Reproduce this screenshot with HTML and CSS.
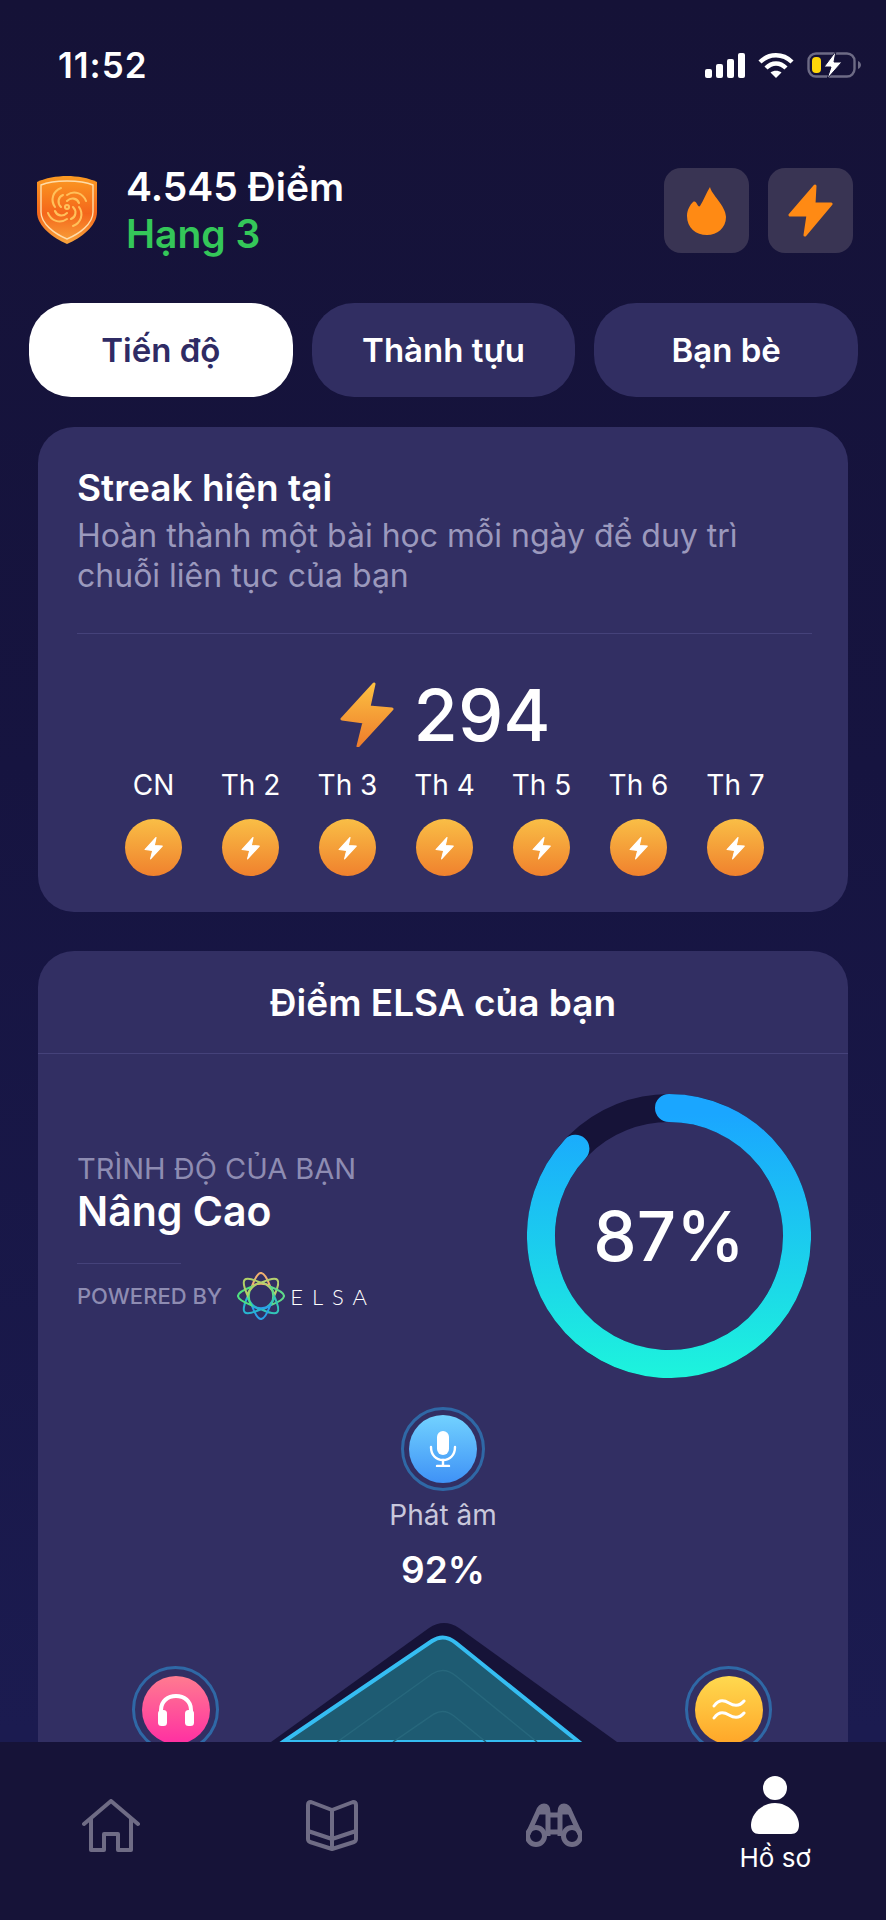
FILE: index.html
```html
<!DOCTYPE html>
<html lang="vi">
<head>
    <meta charset="UTF-8">
    <meta name="viewport" content="width=device-width, initial-scale=1.0">
    <title>Hồ sơ</title>
    <link rel="stylesheet" href="styles.css">
</head>
<body>

    <svg class="defs" width="0" height="0">
        <defs>
            <symbol id="bolt" viewBox="0 0 55 65">
                <path d="M35 2 L3 37 L25 40 L19 64 L53 27 L30 25 Z" stroke-width="3" stroke-linejoin="round"/>
            </symbol>
            <symbol id="petal" viewBox="-24 -24 48 48" overflow="visible">
                <path d="M-9 -10 C-6 -18 -3 -23 0 -23 C3 -23 6 -18 9 -10 C4 -13 -4 -13 -9 -10 Z"/>
            </symbol>
            <g id="swirl-arm">
                <path d="M30 25 C34 21 40 22 42 27"/>
                <path d="M30 19 C37 14 46 17 49 25"/>
            </g>
            <linearGradient id="boltGrad" x1="0" y1="0" x2="0" y2="1">
                <stop offset="0" stop-color="#fcc041"/>
                <stop offset="1" stop-color="#ee7d2c"/>
            </linearGradient>
            <linearGradient id="ringGrad" gradientUnits="userSpaceOnUse" x1="0" y1="20" x2="0" y2="284">
                <stop offset="0" stop-color="#1aa6ff"/>
                <stop offset="1" stop-color="#1df4dc"/>
            </linearGradient>
            <linearGradient id="shieldGrad" x1="0" y1="0" x2="0" y2="1">
                <stop offset="0" stop-color="#fb9a22"/>
                <stop offset="0.55" stop-color="#f4661b"/>
                <stop offset="1" stop-color="#f8a53c"/>
            </linearGradient>
        </defs>
    </svg>

    <!-- Status bar -->
    <div class="status-bar">
        <span class="clock">11:52</span>
        <div class="status-icons">
            <svg width="40" height="25" viewBox="0 0 40 25" fill="#fff">
                <rect x="0" y="16" width="7" height="9" rx="2"/>
                <rect x="11" y="11" width="7" height="14" rx="2"/>
                <rect x="22" y="6" width="7" height="19" rx="2"/>
                <rect x="33" y="0" width="7" height="25" rx="2"/>
            </svg>
            <svg width="36" height="25" viewBox="0 0 36 25" fill="none" stroke="#fff" stroke-width="4.4">
                <path d="M2 9 C11 0 25 0 34 9"/>
                <path d="M8 15 C14 9 22 9 28 15"/>
                <path d="M18 25 L12.5 19.5 C15.5 17 20.5 17 23.5 19.5 Z" fill="#fff" stroke="none"/>
            </svg>
            <svg width="56" height="30" viewBox="0 0 56 30">
                <rect x="1.5" y="3.5" width="46" height="23" rx="7.5" fill="none" stroke="#6d6b85" stroke-width="2.4"/>
                <path d="M51 11 C53 12 54 13.5 54 15 C54 16.5 53 18 51 19 Z" fill="#6d6b85"/>
                <rect x="5" y="7" width="9" height="16" rx="4" fill="#ffd60a"/>
                <path d="M29 1 L17 17 H24 L20 29 L35 12 H27 Z" fill="#fff" stroke="#161338" stroke-width="1"/>
            </svg>
        </div>
    </div>

    <!-- Points header -->
    <div class="profile-head">
        <svg class="shield" width="60" height="68" viewBox="0 0 60 68" fill="none">
            <path d="M30 0 C40 0 52 2 60 6 V36 C60 50 44 62 30 68 C16 62 0 50 0 36 V6 C8 2 20 0 30 0 Z" fill="url(#shieldGrad)"/>
            <path d="M30 5 C39 5 49 6 56 9 V36 C56 48 42 58 30 63 C18 58 4 48 4 36 V9 C11 6 21 5 30 5 Z" stroke="#ffdca8" stroke-width="1.4"/>
            <g stroke="#ffc05a" stroke-width="2.1" stroke-linecap="round">
                <circle cx="30" cy="31" r="2"/>
                <use href="#swirl-arm"/>
                <use href="#swirl-arm" transform="rotate(90 30 31)"/>
                <use href="#swirl-arm" transform="rotate(180 30 31)"/>
                <use href="#swirl-arm" transform="rotate(270 30 31)"/>
            </g>
        </svg>
        <div class="score">
            <div class="score-points">4.545 Điểm</div>
            <div class="score-rank">Hạng 3</div>
        </div>
        <div class="head-actions">
            <div class="head-btn">
                <svg width="39" height="49" viewBox="0 0 39 49" fill="#ff8a14">
                    <path d="M23 1 C24 8 39 20 39 31 C39 42 30 49 20 49 C9 49 0 42 0 30 C0 24 3 19 6 16 C8 15 9 16 10 18 C11 20 12 21 13 20 C17 14 19 7 23 1 Z"/>
                </svg>
            </div>
            <div class="head-btn">
                <svg width="45" height="53" viewBox="0 0 45 53" fill="#ff8a14" stroke="#ff8a14" stroke-width="3" stroke-linejoin="round">
                    <path d="M27 2 L2 31 H20 L17 51 L43 20 H26 Z"/>
                </svg>
            </div>
        </div>
    </div>

    <!-- Tabs -->
    <div class="tabs">
        <div class="tab tab-active">Tiến độ</div>
        <div class="tab">Thành tựu</div>
        <div class="tab">Bạn bè</div>
    </div>

    <div class="content">

        <!-- Streak card -->
        <section class="card streak-card">
            <h2 class="streak-title">Streak hiện tại</h2>
            <p class="streak-desc">Hoàn thành một bài học mỗi ngày để duy trì chuỗi liên tục của bạn</p>
            <div class="streak-line"></div>
            <div class="streak-count">
                <svg class="bolt-grad" width="55" height="65"><use href="#bolt"/></svg>
                <span>294</span>
            </div>
            <div class="week">
                <div class="day"><span>CN</span><div class="day-dot"><svg width="19" height="28"><use href="#bolt"/></svg></div></div>
                <div class="day"><span>Th 2</span><div class="day-dot"><svg width="19" height="28"><use href="#bolt"/></svg></div></div>
                <div class="day"><span>Th 3</span><div class="day-dot"><svg width="19" height="28"><use href="#bolt"/></svg></div></div>
                <div class="day"><span>Th 4</span><div class="day-dot"><svg width="19" height="28"><use href="#bolt"/></svg></div></div>
                <div class="day"><span>Th 5</span><div class="day-dot"><svg width="19" height="28"><use href="#bolt"/></svg></div></div>
                <div class="day"><span>Th 6</span><div class="day-dot"><svg width="19" height="28"><use href="#bolt"/></svg></div></div>
                <div class="day"><span>Th 7</span><div class="day-dot"><svg width="19" height="28"><use href="#bolt"/></svg></div></div>
            </div>
        </section>

        <!-- ELSA score card -->
        <section class="card score-card">
            <h2 class="score-card-title">Điểm ELSA của bạn</h2>
            <div class="level-row">
                <div class="level">
                    <div class="level-label">TRÌNH ĐỘ CỦA BẠN</div>
                    <div class="level-name">Nâng Cao</div>
                    <div class="level-line"></div>
                    <div class="powered">
                        <span class="powered-by">POWERED BY</span>
                        <svg class="elsa-mark" width="48" height="48" viewBox="-24 -24 48 48" fill="none" stroke-width="2.1">
                            <path stroke="#f0b070" d="M-9 -10 C-6 -18 -3 -23 0 -23 C3 -23 6 -18 9 -10 C4 -13 -4 -13 -9 -10 Z"/>
                            <path stroke="#b5d070" transform="rotate(45)" d="M-9 -10 C-6 -18 -3 -23 0 -23 C3 -23 6 -18 9 -10 C4 -13 -4 -13 -9 -10 Z"/>
                            <path stroke="#5fd98a" transform="rotate(90)" d="M-9 -10 C-6 -18 -3 -23 0 -23 C3 -23 6 -18 9 -10 C4 -13 -4 -13 -9 -10 Z"/>
                            <path stroke="#33c4b8" transform="rotate(135)" d="M-9 -10 C-6 -18 -3 -23 0 -23 C3 -23 6 -18 9 -10 C4 -13 -4 -13 -9 -10 Z"/>
                            <path stroke="#2aa0e8" transform="rotate(180)" d="M-9 -10 C-6 -18 -3 -23 0 -23 C3 -23 6 -18 9 -10 C4 -13 -4 -13 -9 -10 Z"/>
                            <path stroke="#28b4d0" transform="rotate(225)" d="M-9 -10 C-6 -18 -3 -23 0 -23 C3 -23 6 -18 9 -10 C4 -13 -4 -13 -9 -10 Z"/>
                            <path stroke="#50e080" transform="rotate(270)" d="M-9 -10 C-6 -18 -3 -23 0 -23 C3 -23 6 -18 9 -10 C4 -13 -4 -13 -9 -10 Z"/>
                            <path stroke="#b0d068" transform="rotate(315)" d="M-9 -10 C-6 -18 -3 -23 0 -23 C3 -23 6 -18 9 -10 C4 -13 -4 -13 -9 -10 Z"/>
                        </svg>
                        <span class="elsa-word">ELSA</span>
                    </div>
                </div>
                <div class="ring">
                    <svg width="284" height="284" viewBox="0 0 284 284" fill="none" stroke-width="28">
                        <circle cx="142" cy="142" r="128" stroke="#161338"/>
                        <path d="M142 14 A128 128 0 1 1 48.4 54.7" stroke="url(#ringGrad)" stroke-linecap="round"/>
                    </svg>
                    <div class="ring-value">87%</div>
                </div>
            </div>

            <div class="skill-top">
                <div class="skill-badge">
                    <div class="skill-dot dot-blue">
                        <svg width="28" height="36" viewBox="0 0 28 36" fill="none" stroke="#fff" stroke-width="2.4" stroke-linecap="round">
                            <rect x="8" y="0" width="12" height="24" rx="6" fill="#fff" stroke="none"/>
                            <path d="M2 16 C2 24 7 29 14 29 C21 29 26 24 26 16"/>
                            <path d="M14 29 V34"/>
                            <path d="M8 35 H20"/>
                        </svg>
                    </div>
                </div>
                <div class="skill-name">Phát âm</div>
                <div class="skill-value">92%</div>
            </div>

            <div class="radar-row">
                <div class="skill-badge skill-side">
                    <div class="skill-dot dot-pink">
                        <svg width="36" height="34" viewBox="0 0 36 34" fill="none" stroke="#fff" stroke-width="4" stroke-linecap="round">
                            <path d="M3 24 V17 C3 8 10 3 18 3 C26 3 33 8 33 17 V24"/>
                            <rect x="0" y="17" width="9" height="16" rx="3.5" fill="#fff" stroke="none"/>
                            <rect x="27" y="17" width="9" height="16" rx="3.5" fill="#fff" stroke="none"/>
                        </svg>
                    </div>
                </div>
                <svg class="radar" width="346" height="120" viewBox="0 0 346 120" fill="none">
                    <path d="M0 120 L158 6 Q173 -4 188 6 L346 120 Z" fill="#161338"/>
                    <path d="M12 120 L161 19 Q173 11 185 21 L308 120 Z" fill="#1e5b72" stroke="#35bdf2" stroke-width="4"/>
                    <path d="M66 120 L161 52 Q173 44 185 54 L266 120" stroke="#27677c" stroke-width="1.5"/>
                    <path d="M122 120 L163 92 Q173 86 183 94 L215 120" stroke="#27677c" stroke-width="1.5"/>
                </svg>
                <div class="skill-badge skill-side">
                    <div class="skill-dot dot-yellow">
                        <svg width="34" height="24" viewBox="0 0 34 24" fill="none" stroke="#fff" stroke-width="3" stroke-linecap="round">
                            <path d="M2 8 C7 1 12 2 17 5 C22 8 27 9 32 3"/>
                            <path d="M2 20 C7 13 12 14 17 17 C22 20 27 21 32 15"/>
                        </svg>
                    </div>
                </div>
            </div>
        </section>
    </div>

    <!-- Bottom nav -->
    <nav class="nav">
        <div class="nav-item">
            <svg width="58" height="53" viewBox="0 0 58 53" fill="none" stroke="#6f6c85" stroke-width="4" stroke-linecap="round" stroke-linejoin="round">
                <path d="M2 25 L29 2 L56 25"/>
                <path d="M9 20 V51 H22 V35 H36 V51 H49 V20"/>
            </svg>
        </div>
        <div class="nav-item">
            <svg width="52" height="51" viewBox="0 0 52 51" fill="none" stroke="#6f6c85" stroke-width="4" stroke-linejoin="round">
                <path d="M26 10 L5 2 Q2 2 2 5 V39 Q2 41 4 42 L26 49 L48 42 Q50 41 50 39 V5 Q50 2 47 2 Z"/>
                <path d="M26 10 V49"/>
                <path d="M2 31 L26 39 L50 31"/>
            </svg>
        </div>
        <div class="nav-item">
            <svg width="56" height="44" viewBox="0 0 56 44" fill="none" stroke="#6f6c85" stroke-width="5" stroke-linejoin="round">
                <circle cx="10" cy="33" r="8.5"/>
                <circle cx="46" cy="33" r="8.5"/>
                <path d="M2 31 L12 9 Q14 3 18 3 Q22 3 22 9 V33" fill="none"/>
                <path d="M54 31 L44 9 Q42 3 38 3 Q34 3 34 9 V33" fill="none"/>
                <path d="M13 9 Q15 4 18 4 Q21 4 21 9 Z" fill="#6f6c85"/>
                <path d="M43 9 Q41 4 38 4 Q35 4 35 9 Z" fill="#6f6c85"/>
                <path d="M22 12 H34 M22 29 H34"/>
            </svg>
        </div>
        <div class="nav-item nav-active">
            <svg width="48" height="58" viewBox="0 0 48 58" fill="#fff">
                <circle cx="24" cy="12" r="12"/>
                <path d="M24 27 C37 27 48 38 48 49 C48 55 45 58 40 58 H8 C3 58 0 55 0 49 C0 38 11 27 24 27 Z"/>
            </svg>
            <span>Hồ sơ</span>
        </div>
    </nav>

</body>
</html>
```
FILE: styles.css
```css
* {
    box-sizing: border-box;
}

body {
    margin: 0;
    width: 886px;
    height: 1920px;
    overflow: hidden;
    display: flex;
    flex-direction: column;
    font-family: 'Inter', 'Noto Sans', sans-serif;
    color: #fff;
    background: linear-gradient(180deg, #151237 0%, #161440 40%, #1b1b50 90%);
}

.defs {
    position: absolute;
}

/* Status bar */
.status-bar {
    height: 168px;
    flex: none;
    display: flex;
    justify-content: space-between;
    align-items: flex-start;
    padding: 45px 23px 0 58px;
}

.clock {
    font-size: 35px;
    font-weight: 600;
    line-height: 40px;
    letter-spacing: 1px;
}

.status-icons {
    display: flex;
    align-items: center;
    gap: 13px;
    margin-top: 5px;
}

/* Header */
.profile-head {
    height: 84px;
    flex: none;
    display: flex;
    align-items: center;
    padding: 0 33px 0 37px;
}

.shield {
    flex: none;
}

.score {
    margin-left: 29px;
}

.score-points {
    font-size: 39px;
    font-weight: 600;
    line-height: 48px;
}

.score-rank {
    font-size: 39px;
    font-weight: 600;
    line-height: 46px;
    color: #34c759;
}

.head-actions {
    margin-left: auto;
    display: flex;
    gap: 19px;
}

.head-btn {
    width: 85px;
    height: 85px;
    border-radius: 17px;
    background: #393453;
    display: flex;
    align-items: center;
    justify-content: center;
}

/* Tabs */
.tabs {
    flex: none;
    display: flex;
    gap: 19px;
    margin-top: 51px;
    padding: 0 28px 0 29px;
}

.tab {
    flex: 1;
    height: 94px;
    border-radius: 42px;
    background: #312e62;
    display: flex;
    align-items: center;
    justify-content: center;
    font-size: 33px;
    font-weight: 600;
}

.tab-active {
    background: #fff;
    color: #2f2b64;
}

/* Cards */
.content {
    flex: 1;
    min-height: 0;
    overflow: hidden;
    padding: 30px 38px 0;
}

.card {
    background: #322f63;
    border-radius: 36px;
}

.streak-card {
    padding: 39px 36px 36px 39px;
    margin-bottom: 39px;
}

.streak-title {
    margin: 0;
    font-size: 37px;
    font-weight: 600;
    line-height: 44px;
}

.streak-desc {
    margin: 6px 0 0;
    max-width: 680px;
    font-size: 32px;
    line-height: 40px;
    color: #9b99bd;
}

.streak-line {
    height: 1px;
    margin-top: 37px;
    background: #45427a;
}

.streak-count {
    display: flex;
    align-items: center;
    justify-content: center;
    gap: 20px;
    height: 65px;
    margin-top: 48px;
    font-size: 72px;
    font-weight: 500;
}

.bolt-grad {
    fill: url(#boltGrad);
    stroke: url(#boltGrad);
}

.week {
    display: flex;
    justify-content: center;
    margin-top: 21px;
}

.day {
    width: 97px;
    display: flex;
    flex-direction: column;
    align-items: center;
    gap: 17px;
    font-size: 28px;
    line-height: 34px;
}

.day-dot {
    width: 57px;
    height: 57px;
    border-radius: 50%;
    background: linear-gradient(180deg, #f9be46, #f0812d);
    display: flex;
    align-items: center;
    justify-content: center;
    fill: #fff;
    stroke: #fff;
}

.score-card {
    padding-bottom: 60px;
}

.score-card-title {
    margin: 0;
    height: 103px;
    border-bottom: 1px solid #45427a;
    display: flex;
    align-items: center;
    justify-content: center;
    font-size: 37px;
    font-weight: 600;
}

.level-row {
    display: flex;
    justify-content: space-between;
    padding: 40px 37px 0 39px;
}

.level {
    margin-top: 58px;
}

.level-label {
    font-size: 29px;
    line-height: 34px;
    color: #8e8cb2;
}

.level-name {
    font-size: 41px;
    font-weight: 600;
    line-height: 50px;
}

.level-line {
    width: 104px;
    height: 1px;
    margin-top: 27px;
    background: #45427a;
}

.powered {
    display: flex;
    align-items: center;
    height: 48px;
    margin-top: 8px;
}

.powered-by {
    font-size: 22px;
    font-weight: 500;
    color: #8e8cb2;
}

.elsa-mark {
    margin-left: 15px;
}

.elsa-word {
    margin-left: 5px;
    font-family: 'Lato', sans-serif;
    font-weight: 300;
    font-size: 22px;
    letter-spacing: 9px;
    color: #fff;
}

.ring {
    display: grid;
    place-items: center;
}

.ring > * {
    grid-area: 1 / 1;
}

.ring-value {
    font-size: 69px;
    font-weight: 500;
}

/* Skills */
.skill-top {
    display: flex;
    flex-direction: column;
    align-items: center;
    margin-top: 29px;
}

.skill-badge {
    width: 84px;
    height: 84px;
    flex: none;
    border: 3px solid #2f68a6;
    border-radius: 50%;
    display: flex;
    align-items: center;
    justify-content: center;
}

.skill-side {
    width: 87px;
    height: 87px;
    margin-top: 44px;
}

.skill-dot {
    width: 68px;
    height: 68px;
    border-radius: 50%;
    display: flex;
    align-items: center;
    justify-content: center;
}

.dot-blue {
    background: linear-gradient(180deg, #72d2ff, #3f92f6);
}

.dot-pink {
    background: linear-gradient(180deg, #ff7b90, #ff2fa2);
}

.dot-yellow {
    background: linear-gradient(180deg, #ffd94f, #ffa628);
}

.skill-name {
    margin-top: 7px;
    font-size: 28px;
    line-height: 34px;
    color: #c9c8dc;
}

.skill-value {
    margin-top: 17px;
    font-size: 37px;
    font-weight: 600;
    line-height: 42px;
}

.radar-row {
    display: flex;
    align-items: flex-start;
    margin-top: 31px;
    padding-left: 94px;
}

.radar {
    flex: none;
    margin: 0 68px 0 52px;
}

/* Bottom nav */
.nav {
    height: 178px;
    flex: none;
    display: grid;
    grid-template-columns: repeat(4, 1fr);
    align-items: center;
    padding-bottom: 12px;
    background: #161338;
}

.nav-item {
    display: flex;
    flex-direction: column;
    align-items: center;
}

.nav-active span {
    margin-top: 8px;
    font-size: 26px;
    line-height: 32px;
}
```
